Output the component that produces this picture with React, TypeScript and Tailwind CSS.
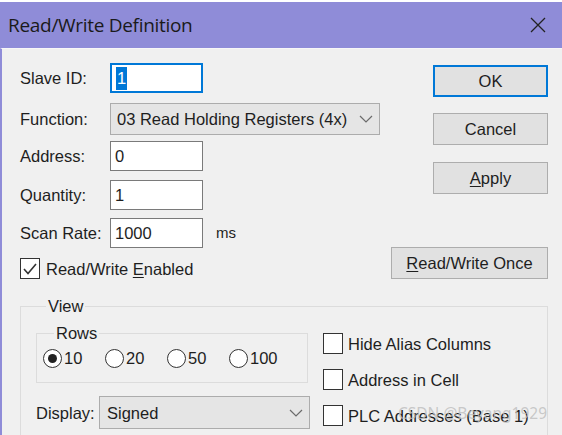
import React from "react";

function Chevron() {
  return (
    <svg width="14" height="8" viewBox="0 0 14 8" className="shrink-0">
      <path d="M1 1 L7 7 L13 1" fill="none" stroke="#6b6b6b" strokeWidth="1.2" />
    </svg>
  );
}

function CheckBox({ checked = false }: { checked?: boolean }) {
  return (
    <span className="w-[20px] h-[21px] border border-[#333] bg-white flex items-center justify-center shrink-0">
      {checked && (
        <svg width="16" height="14" viewBox="0 0 16 14">
          <path d="M2 7 L6 11.5 L14 2" fill="none" stroke="#333" strokeWidth="1.6" />
        </svg>
      )}
    </span>
  );
}

function Radio({ checked = false }: { checked?: boolean }) {
  return (
    <span className="w-[19px] h-[19px] rounded-full border border-[#333] bg-white flex items-center justify-center shrink-0">
      {checked && <span className="w-[9px] h-[9px] rounded-full bg-[#222]" />}
    </span>
  );
}

function Field({ label, value, selected = false }: { label: string; value: string; selected?: boolean }) {
  return (
    <div className="flex items-center">
      <span className="w-[90px]">{label}</span>
      <div
        className={
          "w-[93px] h-[30px] bg-white flex items-center px-[4px] " +
          (selected ? "border-2 border-[#0078d7]" : "border border-[#7a7a7a]")
        }
      >
        {selected ? <span className="bg-[#0078d7] text-white px-[1px] leading-[23px]">{value}</span> : value}
      </div>
    </div>
  );
}

function Button({ children, primary = false, width = "w-[115px]" }: { children: React.ReactNode; primary?: boolean; width?: string }) {
  return (
    <div
      className={
        width +
        " h-[32px] bg-[#e1e1e1] flex items-center justify-center " +
        (primary ? "border-2 border-[#0078d7]" : "border border-[#adadad]")
      }
    >
      {children}
    </div>
  );
}

const rows = ["10", "20", "50", "100"];

export default function App() {
  return (
    <div className="w-[562px] h-[435px] overflow-hidden bg-white pt-[2px] font-['Liberation_Sans',Arial,sans-serif] text-[16.5px] leading-[20px] text-[#1e1e1e] relative">
      <div className="h-[46px] bg-[#8f8cd8] flex items-center justify-between pl-[8px] pr-[16px]">
        <span className="font-['Open_Sans',sans-serif] text-[19px] text-[#1a1a1a] tracking-[-0.3px]">Read/Write Definition</span>
        <svg width="16" height="16" viewBox="0 0 16 16">
          <path d="M1 1 L15 15 M15 1 L1 15" stroke="#222" strokeWidth="1.3" />
        </svg>
      </div>
      <div className="h-[387px] bg-[#f0f0f0] border-l-2 border-[#8f8cd8] border-t border-t-[#f7f7f7]">
        <div className="flex justify-between pl-[18px] pr-[14px]">
          <div className="flex flex-col pt-[14px]">
            <Field label="Slave ID:" value="1" selected />
            <div className="flex items-center mt-[10px]">
              <span className="w-[90px]">Function:</span>
              <div className="w-[270px] h-[32px] bg-[#e5e5e5] border border-[#acacac] flex items-center justify-between pl-[6px] pr-[6px]">
                <span>03 Read Holding Registers (4x)</span>
                <Chevron />
              </div>
            </div>
            <div className="mt-[6px]">
              <Field label="Address:" value="0" />
            </div>
            <div className="mt-[9px]">
              <Field label="Quantity:" value="1" />
            </div>
            <div className="mt-[8px] flex items-center">
              <Field label="Scan Rate:" value="1000" />
              <span className="ml-[13px] text-[15px]">ms</span>
            </div>
            <div className="mt-[10px] flex items-center gap-[6px]">
              <CheckBox checked />
              <span>
                Read/Write <span className="underline underline-offset-2">E</span>nabled
              </span>
            </div>
          </div>
          <div className="flex flex-col items-end pt-[16px]">
            <Button primary>OK</Button>
            <div className="mt-[16px]">
              <Button>Cancel</Button>
            </div>
            <div className="mt-[17px]">
              <Button>
                <span>
                  <span className="underline underline-offset-2">A</span>pply
                </span>
              </Button>
            </div>
            <div className="mt-[53px]">
              <Button width="w-[157px]">
                <span>
                  <span className="underline underline-offset-2">R</span>ead/Write Once
                </span>
              </Button>
            </div>
          </div>
        </div>

        <fieldset className="mt-[17px] ml-[18px] mr-[14px] border border-[#dcdcdc] pl-[15px] pb-[20px] flex">
          <legend className="ml-[10px] px-[2px] leading-[20px]">View</legend>
          <div className="flex gap-[13px]">
            <div className="w-[274px] flex flex-col">
              <fieldset className="mt-[7px] w-[272px] border border-[#dcdcdc] pl-[6px] pb-[14px]">
                <legend className="ml-[11px] px-[2px] leading-[20px]">Rows</legend>
                <div className="flex mt-[5px] h-[20px]">
                  {rows.map((r, i) => (
                    <div key={r} className="w-[62px] flex items-center gap-[2px]">
                      <Radio checked={i === 0} />
                      <span>{r}</span>
                    </div>
                  ))}
                </div>
              </fieldset>
              <div className="flex items-center mt-[13px]">
                <span className="w-[63px]">Display:</span>
                <div className="w-[211px] h-[33px] bg-[#e5e5e5] border border-[#acacac] flex items-center justify-between pl-[7px] pr-[6px]">
                  <span>Signed</span>
                  <Chevron />
                </div>
              </div>
            </div>
            <div className="flex flex-col pt-[17px] gap-[15px]">
              <div className="flex items-center gap-[5px]">
                <CheckBox />
                <span>Hide Alias Columns</span>
              </div>
              <div className="flex items-center gap-[5px]">
                <CheckBox />
                <span>Address in Cell</span>
              </div>
              <div className="flex items-center gap-[5px]">
                <CheckBox />
                <span>PLC Addresses (Base 1)</span>
              </div>
            </div>
          </div>
        </fieldset>
      </div>
      <span className="absolute left-[398px] top-[403px] text-[15.5px] text-[#bdbdbd]/80 font-['Noto_Sans',sans-serif]">CSDN @Beyang1929</span>
    </div>
  );
}
